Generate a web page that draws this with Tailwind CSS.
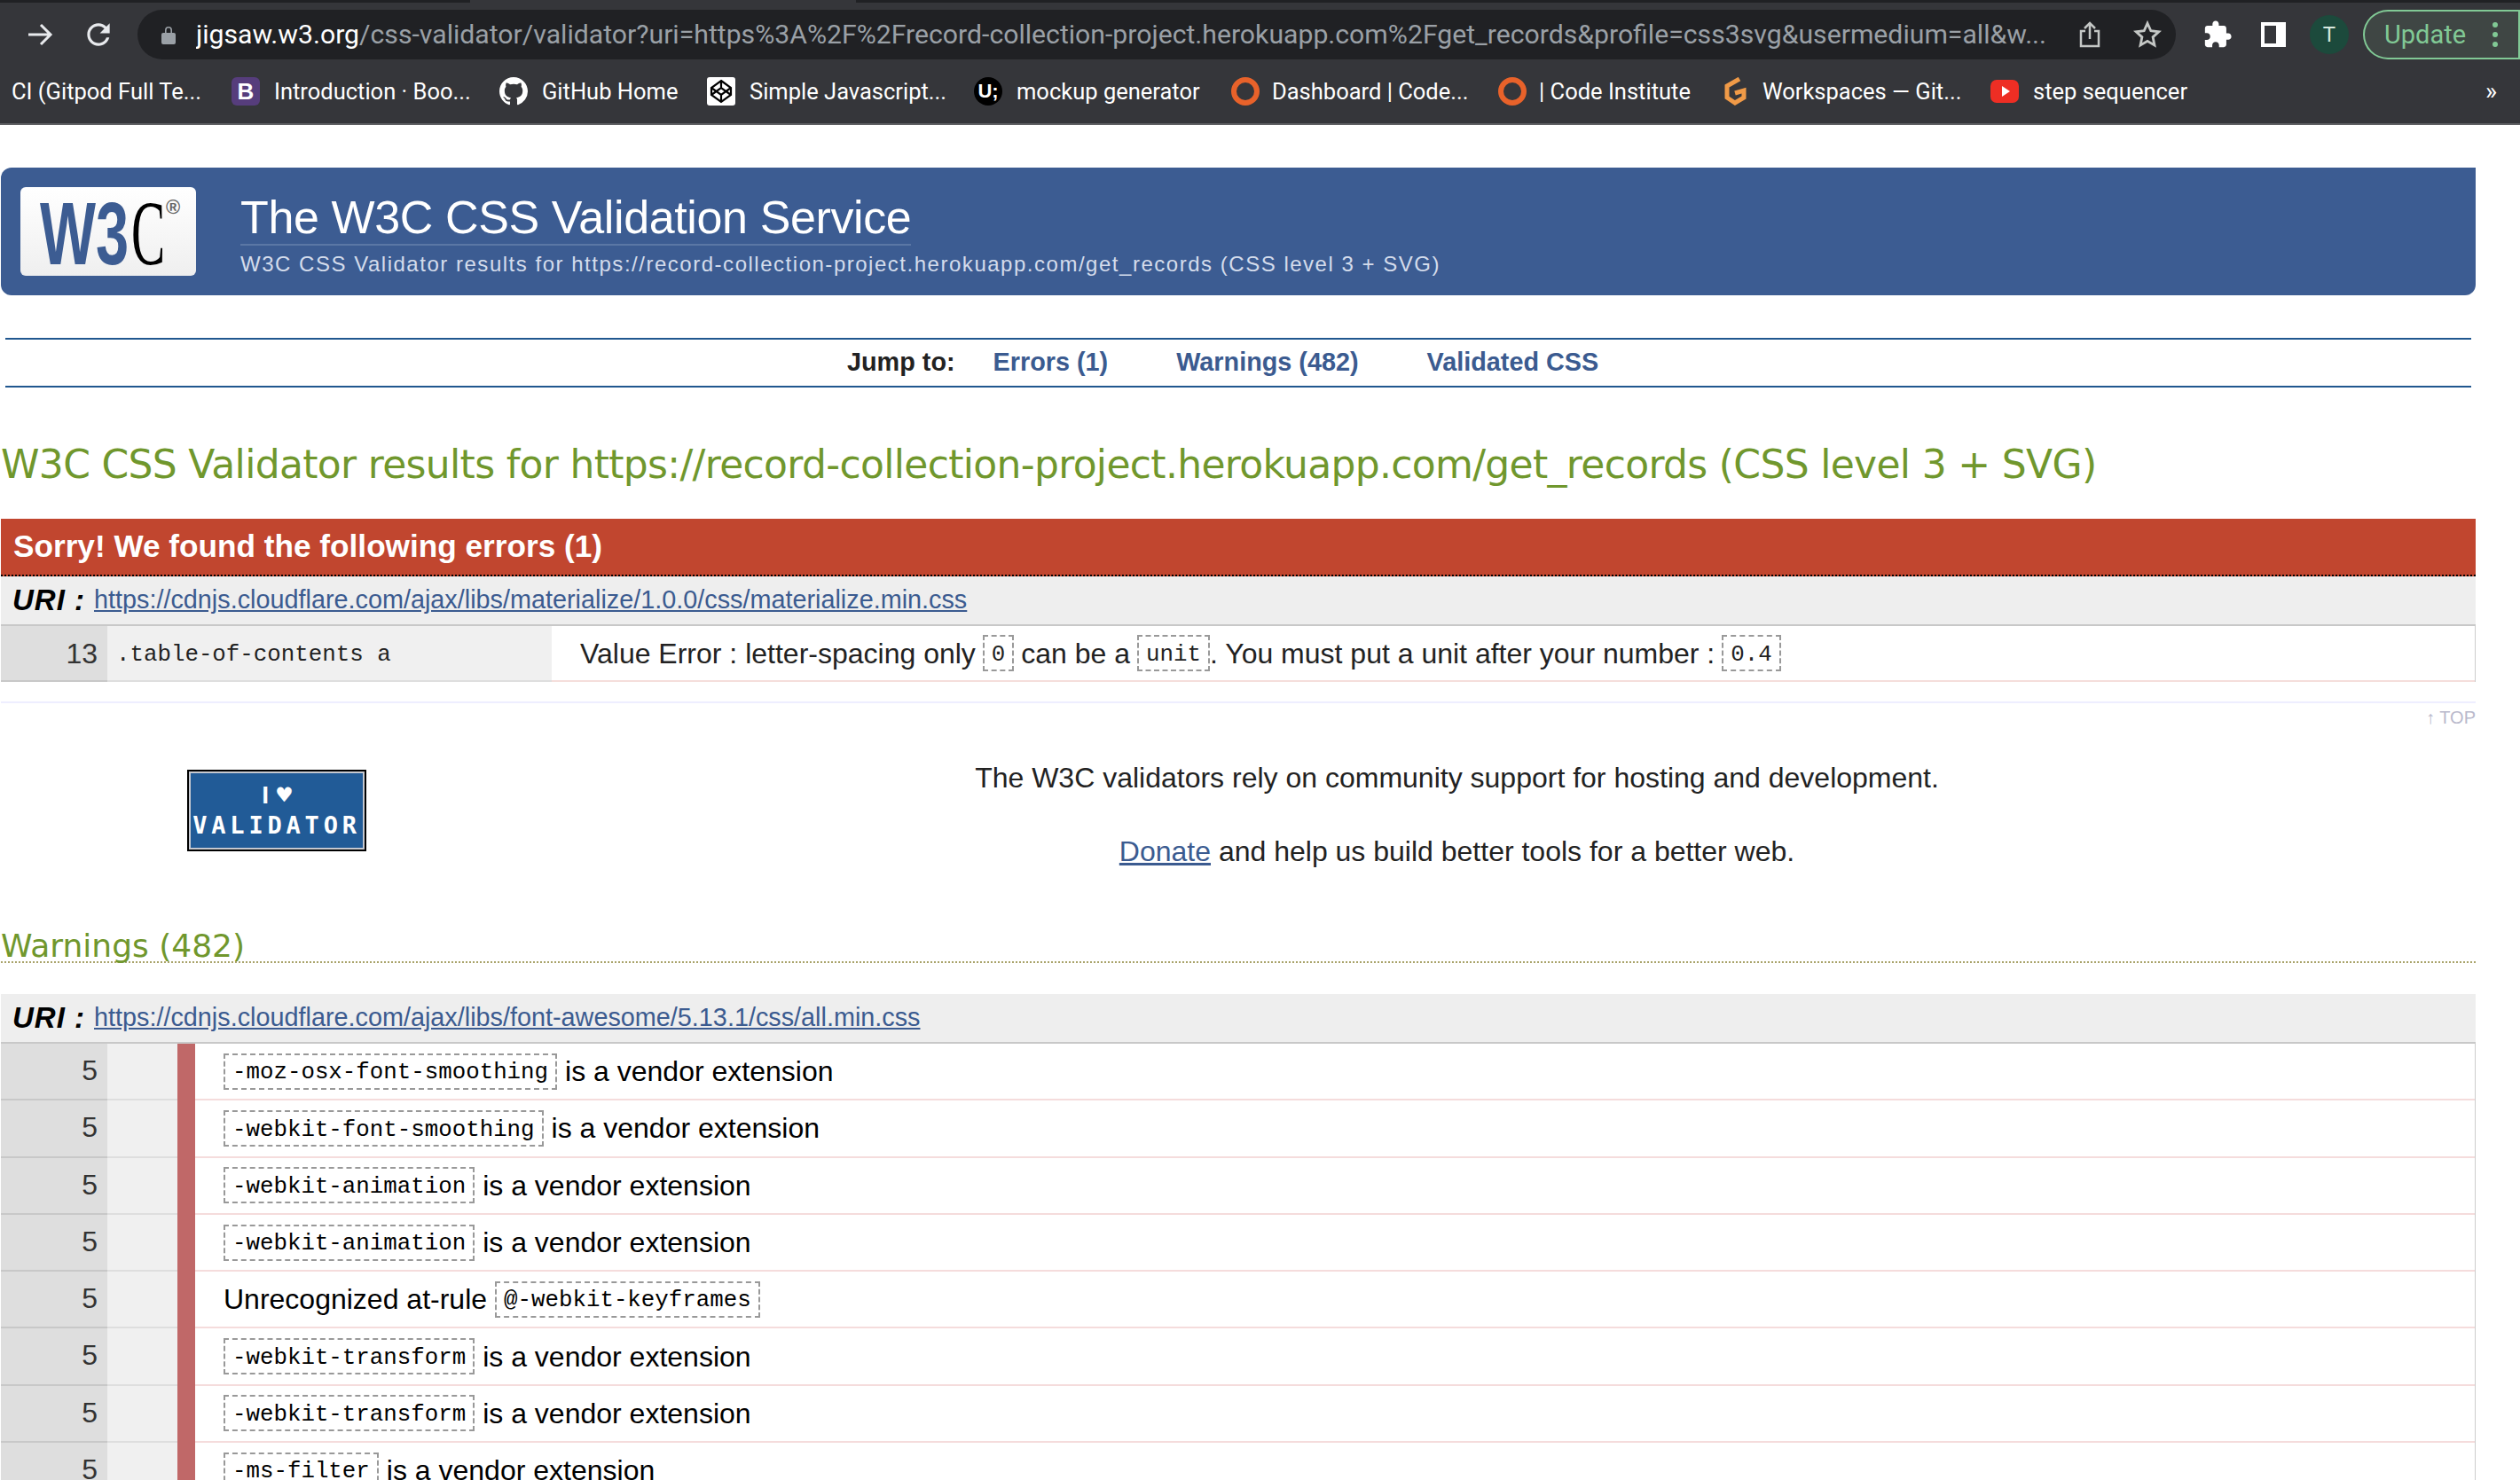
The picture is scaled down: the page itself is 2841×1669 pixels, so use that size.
<!doctype html>
<html lang="en">
<head>
<meta charset="UTF-8" />
<title>W3C CSS Validator results</title>
<script src="https://cdn.jsdelivr.net/npm/@tailwindcss/browser@4"></script>
</head>
<body class="bg-white h-[1669px] overflow-hidden font-['Liberation_Sans',Arial,sans-serif] text-[#222]">

<!-- browser chrome -->
<div class="h-[141px] bg-[#35363a] border-b-2 border-[#5f6063] font-['Roboto',sans-serif] text-white">
  <div class="flex h-[3px]">
    <div class="w-[530px] bg-[#202124]"></div>
    <div class="w-[435px]"></div>
    <div class="flex-1 bg-[#202124]"></div>
  </div>
  <div class="flex items-center h-[56px] mt-[8px] relative">
    <svg class="ml-[29px] w-[32px] h-[32px]" viewBox="0 0 32 32" fill="none" stroke="#e8eaed" stroke-width="3"><path d="M3 16h25M17 5l11 11-11 11"/></svg>
    <svg class="ml-[31px] w-[38px] h-[38px]" viewBox="0 0 24 24" fill="#e8eaed"><path d="M17.65 6.35C16.2 4.9 14.21 4 12 4c-4.42 0-7.99 3.58-7.99 8s3.57 8 7.99 8c3.73 0 6.84-2.55 7.73-6h-2.08c-.82 2.33-3.04 4-5.65 4-3.31 0-6-2.69-6-6s2.69-6 6-6c1.66 0 3.14.69 4.22 1.78L13 11h7V4l-2.35 2.35z"/></svg>
    <div class="ml-[25px] w-[2298px] h-[56px] bg-[#202124] rounded-full flex items-center">
      <svg class="ml-[27px] w-[16px] h-[22px]" viewBox="0 0 16 22" fill="#9aa0a6"><path d="M4 9V6a4 4 0 0 1 8 0v3h-1.600V6a2.400 2.400 0 0 0-4.800 0v3z"/><rect y="9" width="16" height="13" rx="2"/></svg>
      <div class="ml-[23px] w-[2088px] text-[30.200px] leading-[40px] whitespace-nowrap overflow-hidden"><span class="text-white">jigsaw.w3.org</span><span class="text-[#9aa0a6]">/css-validator/validator?uri=https%3A%2F%2Frecord-collection-project.herokuapp.com%2Fget_records&amp;profile=css3svg&amp;usermedium=all&amp;w...</span></div>
      <svg class="ml-[35px] w-[24px] h-[30px]" viewBox="0 0 24 30" fill="none" stroke="#c4c7c5" stroke-width="2.500"><path d="M7 11H2v17h20V11h-5M12 20V2M6 8l6-6 6 6"/></svg>
      <svg class="ml-[36px] w-[34px] h-[34px]" viewBox="0 0 24 24" fill="none" stroke="#c4c7c5" stroke-width="2"><path d="M12 3l2.700 6 6.300.700-4.700 4.300 1.300 6.500L12 17.200 6.400 20.500 7.700 14 3 9.700 9.300 9z"/></svg>
    </div>
    <svg class="ml-[30px] w-[34px] h-[34px]" viewBox="0 0 24 24" fill="#fff"><path d="M20.500 11H19V7c0-1.100-.9-2-2-2h-4V3.500C13 2.120 11.880 1 10.500 1S8 2.120 8 3.500V5H4c-1.100 0-1.990.9-1.990 2v3.800H3.500c1.490 0 2.700 1.210 2.700 2.700s-1.210 2.700-2.700 2.700H2V20c0 1.100.9 2 2 2h3.800v-1.500c0-1.490 1.210-2.700 2.700-2.700 1.490 0 2.700 1.210 2.700 2.700V22H17c1.100 0 2-.9 2-2v-4h1.500c1.380 0 2.500-1.120 2.500-2.500S21.880 11 20.500 11z"/></svg>
    <div class="ml-[32px] w-[28px] h-[28px] border-y-[4px] border-l-[4px] border-r-[11px] border-white"></div>
    <div class="ml-[27px] w-[44px] h-[44px] rounded-full bg-[#1c4a3c] text-[#d7e8df] text-[24px] flex items-center justify-center">T</div>
    <div class="ml-[16px] flex-1 h-[56px] rounded-l-full rounded-r-[28px] border-2 border-[#81c995] bg-[#3f4644] flex items-center text-[#81c995] text-[29px]">
      <span class="ml-[22px] pt-[2px]">Update</span>
      <svg class="ml-[29px] w-[8px] h-[30px]" viewBox="0 0 8 30" fill="#81c995"><circle cx="4" cy="4" r="3"/><circle cx="4" cy="15" r="3"/><circle cx="4" cy="26" r="3"/></svg>
    </div>
  </div>
  <div class="flex items-center h-[36px] mt-[18px] pl-[13px] text-[25.500px] leading-[36px] whitespace-nowrap">
    <span class="w-[248px]">CI (Gitpod Full Te...</span>
    <span class="w-[32px] h-[32px] rounded-[6px] bg-[#563d7c] flex items-center justify-center font-['Liberation_Sans'] font-bold text-[26px]">B</span>
    <span class="ml-[16px] w-[254px]">Introduction · Boo...</span>
    <svg class="w-[32px] h-[32px]" viewBox="0 0 16 16" fill="#fff"><path d="M8 0C3.580 0 0 3.580 0 8c0 3.540 2.290 6.530 5.470 7.590.4.070.55-.17.55-.38 0-.19-.01-.82-.01-1.490-2.010.37-2.530-.49-2.690-.94-.09-.23-.48-.94-.82-1.130-.28-.15-.68-.52-.01-.53.63-.01 1.080.58 1.230.82.72 1.210 1.870.87 2.330.66.07-.52.28-.87.51-1.070-1.780-.2-3.640-.89-3.640-3.950 0-.87.31-1.590.82-2.150-.08-.2-.36-1.020.08-2.120 0 0 .67-.21 2.200.82.64-.18 1.320-.27 2-.27.68 0 1.360.09 2 .27 1.530-1.040 2.200-.82 2.200-.82.44 1.100.16 1.920.08 2.120.51.56.82 1.270.82 2.150 0 3.070-1.870 3.750-3.650 3.950.29.25.54.73.54 1.480 0 1.070-.01 1.930-.01 2.200 0 .21.15.46.55.38A8.013 8.013 0 0016 8c0-4.420-3.580-8-8-8z"/></svg>
    <span class="ml-[16px] w-[186px]">GitHub Home</span>
    <svg class="w-[32px] h-[32px]" viewBox="0 0 32 32"><rect width="32" height="32" rx="3" fill="#fff"/><path d="M16 4l11 8v8l-11 8-11-8v-8zM16 4v8M27 12l-11 8-11-8M16 28v-8M5 20l11-8 11 8" fill="none" stroke="#000" stroke-width="2.200"/></svg>
    <span class="ml-[16px] w-[253px]">Simple Javascript...</span>
    <span class="w-[32px] h-[32px] rounded-full bg-black flex items-center justify-center font-['Liberation_Sans'] font-bold text-[22px]">U;</span>
    <span class="ml-[16px] w-[242px]">mockup generator</span>
    <span class="w-[32px] h-[32px] rounded-full border-[6px] border-[#e8622a]"></span>
    <span class="ml-[14px] w-[255px]">Dashboard | Code...</span>
    <span class="w-[32px] h-[32px] rounded-full border-[6px] border-[#e8622a]"></span>
    <span class="ml-[14px] w-[206px]">| Code Institute</span>
    <svg class="w-[30px] h-[32px]" viewBox="0 0 30 32" fill="none" stroke="#f09a47" stroke-width="5"><path d="M20 2L6 10v13l9 6 10-6V15l-10 3"/></svg>
    <span class="ml-[16px] w-[257px]">Workspaces — Git...</span>
    <svg class="w-[32px] h-[32px]" viewBox="0 0 32 32"><rect y="3" width="32" height="26" rx="7" fill="#ee2e24"/><path d="M13 10l9 6-9 6z" fill="#fff"/></svg>
    <span class="ml-[16px]">step sequencer</span>
    <span class="absolute left-[2802px] text-[28px]">»</span>
  </div>
</div>

<div class="pl-px w-[2791px]">
  <!-- header -->
  <div class="mt-[48px] h-[144px] bg-[#3c5c92] rounded-l-[12px] rounded-br-[12px] flex">
    <div class="ml-[22px] mt-[22px] w-[198px] h-[100px] rounded-[6px] bg-linear-to-b from-white to-[#efefef]">
      <svg viewBox="0 0 198 100" class="w-[198px] h-[100px] overflow-visible">
        <text transform="translate(22 87) scale(.667 1)" font-family="Liberation Sans" font-weight="700" font-size="100" fill="#3c5c92">W3</text>
        <text transform="translate(125 87) scale(.55 1)" font-family="Liberation Serif" font-size="104" fill="#000">C</text>
        <text x="164" y="30" font-family="Liberation Sans" font-weight="700" font-size="22" fill="#666">®</text>
      </svg>
    </div>
    <div class="ml-[50px] flex flex-col">
      <h1 class="mt-[30px] h-[58px] w-fit border-b-2 border-[#5b77a5] text-white text-[52px] leading-[52px] tracking-[-0.38px] whitespace-nowrap">The W3C CSS Validation Service</h1>
      <p class="mt-[5px] text-[#d4dcec] text-[24px] leading-[32px] tracking-[1.520px] whitespace-nowrap">W3C CSS Validator results for https://record-collection-project.herokuapp.com/get_records (CSS level 3 + SVG)</p>
    </div>
  </div>

  <!-- jump to -->
  <div class="mt-[48px] mx-[5px] h-[56px] border-y-2 border-[#20578f] flex items-center text-[28.800px] font-bold whitespace-nowrap pl-[949px]">
    <span>Jump to:</span>
    <a class="ml-[43px] text-[#3b5b90]">Errors (1)</a>
    <a class="ml-[77px] text-[#3b5b90]">Warnings (482)</a>
    <a class="ml-[77px] text-[#3b5b90]">Validated CSS</a>
  </div>

  <h2 class="h-[148px] pt-[26px] flex items-center text-[44px] tracking-[-0.680px] text-[#70972d] font-['DejaVu_Sans',sans-serif] whitespace-nowrap">W3C CSS Validator results for https://record-collection-project.herokuapp.com/get_records (CSS level 3 + SVG)</h2>

  <!-- errors -->
  <div class="h-[65px] bg-[#c1462f] border-b-2 border-dotted border-black pl-[14px] flex items-center text-white font-bold text-[35.200px] whitespace-nowrap">Sorry! We found the following errors (1)</div>
  <div class="h-[56px] bg-[#eeeeee] border-b-2 border-[#c8c8c8] pl-[13px] flex items-center text-[28.800px] whitespace-nowrap">
    <b class="w-[92px] italic text-black text-[33px] tracking-[1px]">URI :</b>
    <a class="text-[#3b5b90] underline">https://cdnjs.cloudflare.com/ajax/libs/materialize/1.0.0/css/materialize.min.css</a>
  </div>
  <div class="flex h-[63px] border-r border-[#ccc] text-[#222]">
    <div class="w-[120px] border-b-2 border-[#c8c8c8] bg-[#dedede] text-[#333] text-[32px] text-right pr-[11px] leading-[62px]">13</div>
    <div class="w-[501px] border-b-2 border-[#dedede] bg-[#f0f0f0] pl-[10px] font-['Liberation_Mono',monospace] text-[25.800px] leading-[66px]">.table-of-contents a</div>
    <div class="flex-1 border-b-2 border-[#f5dedb] pl-[32px] flex items-center text-[32px] whitespace-nowrap gap-[8px]">
      <span>Value Error : letter-spacing only</span>
      <code class="h-[41px] px-[8px] pt-[5px] inline-flex items-center border-2 border-dashed border-[#999] font-['Liberation_Mono',monospace] text-[25.800px] text-[#222]">0</code>
      <span>can be a</span>
      <span class="flex items-center"><code class="h-[41px] px-[8px] pt-[5px] inline-flex items-center border-2 border-dashed border-[#999] font-['Liberation_Mono',monospace] text-[25.800px]">unit</code>. You must put a unit after your number :</span>
      <code class="h-[41px] px-[8px] pt-[5px] inline-flex items-center border-2 border-dashed border-[#999] font-['Liberation_Mono',monospace] text-[25.800px]">0.4</code>
    </div>
  </div>

  <div class="mt-[22px] border-t-2 border-[#eeeeff]"></div>
  <div class="h-[32px] flex justify-end items-center text-[20px] text-[#b9b9cc] whitespace-nowrap">↑ TOP</div>

  <!-- donate -->
  <div class="h-[215px] flex">
    <div class="w-[493px] shrink-0 pt-[43px] pl-[210px]">
      <div class="w-[202px] h-[92px] border-2 border-black bg-[#215b97] outline-2 -outline-offset-4 outline-[#c6c9d0] flex flex-col items-center justify-center text-white font-['DejaVu_Sans_Mono',monospace] font-bold leading-[34px]">
        <span class="flex items-center gap-[9px] text-[28px]"><span class="font-['Liberation_Sans']">I</span><span>♥</span></span>
        <span class="text-[27px] tracking-[4.800px]">VALIDATOR</span>
      </div>
    </div>
    <div class="flex-1 text-center text-[32px] leading-[46px] pt-[29px]">
      <p>The W3C validators rely on community support for hosting and development.</p>
      <p class="mt-[37px]"><a class="text-[#3b5b90] underline">Donate</a> and help us build better tools for a better web.</p>
    </div>
  </div>

  <!-- warnings -->
  <div class="h-[46px] border-b-2 border-dotted border-[#a9a36a] pt-[10px] leading-[34px] text-[36px] text-[#70972d] font-['DejaVu_Sans',sans-serif]">Warnings (482)</div>
  <div class="mt-[35px] h-[56px] bg-[#eeeeee] border-b-2 border-[#c8c8c8] pl-[13px] flex items-center text-[28.800px] whitespace-nowrap">
    <b class="w-[92px] italic text-black text-[33px] tracking-[1px]">URI :</b>
    <a class="text-[#3b5b90] underline">https://cdnjs.cloudflare.com/ajax/libs/font-awesome/5.13.1/css/all.min.css</a>
  </div>

  <div class="border-r border-[#ccc] text-black text-[32px]">
    <div class="flex h-[64.300px]">
      <div class="w-[120px] border-b-2 border-[#c8c8c8] bg-[#dedede] text-[#333] text-right pr-[11px] leading-[60px]">5</div>
      <div class="w-[79px] border-b-2 border-[#dedede] bg-[#f0f0f0]"></div>
      <div class="w-[20px] bg-[#c06868]"></div>
      <div class="flex-1 border-b-2 border-[#f5dcdc] pl-[32px] flex items-center gap-[9px] whitespace-nowrap"><code class="h-[41px] px-[8px] pt-[5px] inline-flex items-center border-2 border-dashed border-[#999] font-['Liberation_Mono',monospace] text-[25.800px]">-moz-osx-font-smoothing</code><span>is a vendor extension</span></div>
    </div>
    <div class="flex h-[64.300px]">
      <div class="w-[120px] border-b-2 border-[#c8c8c8] bg-[#dedede] text-[#333] text-right pr-[11px] leading-[60px]">5</div>
      <div class="w-[79px] border-b-2 border-[#dedede] bg-[#f0f0f0]"></div>
      <div class="w-[20px] bg-[#c06868]"></div>
      <div class="flex-1 border-b-2 border-[#f5dcdc] pl-[32px] flex items-center gap-[9px] whitespace-nowrap"><code class="h-[41px] px-[8px] pt-[5px] inline-flex items-center border-2 border-dashed border-[#999] font-['Liberation_Mono',monospace] text-[25.800px]">-webkit-font-smoothing</code><span>is a vendor extension</span></div>
    </div>
    <div class="flex h-[64.300px]">
      <div class="w-[120px] border-b-2 border-[#c8c8c8] bg-[#dedede] text-[#333] text-right pr-[11px] leading-[60px]">5</div>
      <div class="w-[79px] border-b-2 border-[#dedede] bg-[#f0f0f0]"></div>
      <div class="w-[20px] bg-[#c06868]"></div>
      <div class="flex-1 border-b-2 border-[#f5dcdc] pl-[32px] flex items-center gap-[9px] whitespace-nowrap"><code class="h-[41px] px-[8px] pt-[5px] inline-flex items-center border-2 border-dashed border-[#999] font-['Liberation_Mono',monospace] text-[25.800px]">-webkit-animation</code><span>is a vendor extension</span></div>
    </div>
    <div class="flex h-[64.300px]">
      <div class="w-[120px] border-b-2 border-[#c8c8c8] bg-[#dedede] text-[#333] text-right pr-[11px] leading-[60px]">5</div>
      <div class="w-[79px] border-b-2 border-[#dedede] bg-[#f0f0f0]"></div>
      <div class="w-[20px] bg-[#c06868]"></div>
      <div class="flex-1 border-b-2 border-[#f5dcdc] pl-[32px] flex items-center gap-[9px] whitespace-nowrap"><code class="h-[41px] px-[8px] pt-[5px] inline-flex items-center border-2 border-dashed border-[#999] font-['Liberation_Mono',monospace] text-[25.800px]">-webkit-animation</code><span>is a vendor extension</span></div>
    </div>
    <div class="flex h-[64.300px]">
      <div class="w-[120px] border-b-2 border-[#c8c8c8] bg-[#dedede] text-[#333] text-right pr-[11px] leading-[60px]">5</div>
      <div class="w-[79px] border-b-2 border-[#dedede] bg-[#f0f0f0]"></div>
      <div class="w-[20px] bg-[#c06868]"></div>
      <div class="flex-1 border-b-2 border-[#f5dcdc] pl-[32px] flex items-center gap-[9px] whitespace-nowrap"><span>Unrecognized at-rule</span><code class="h-[41px] px-[8px] pt-[5px] inline-flex items-center border-2 border-dashed border-[#999] font-['Liberation_Mono',monospace] text-[25.800px]">@-webkit-keyframes</code></div>
    </div>
    <div class="flex h-[64.300px]">
      <div class="w-[120px] border-b-2 border-[#c8c8c8] bg-[#dedede] text-[#333] text-right pr-[11px] leading-[60px]">5</div>
      <div class="w-[79px] border-b-2 border-[#dedede] bg-[#f0f0f0]"></div>
      <div class="w-[20px] bg-[#c06868]"></div>
      <div class="flex-1 border-b-2 border-[#f5dcdc] pl-[32px] flex items-center gap-[9px] whitespace-nowrap"><code class="h-[41px] px-[8px] pt-[5px] inline-flex items-center border-2 border-dashed border-[#999] font-['Liberation_Mono',monospace] text-[25.800px]">-webkit-transform</code><span>is a vendor extension</span></div>
    </div>
    <div class="flex h-[64.300px]">
      <div class="w-[120px] border-b-2 border-[#c8c8c8] bg-[#dedede] text-[#333] text-right pr-[11px] leading-[60px]">5</div>
      <div class="w-[79px] border-b-2 border-[#dedede] bg-[#f0f0f0]"></div>
      <div class="w-[20px] bg-[#c06868]"></div>
      <div class="flex-1 border-b-2 border-[#f5dcdc] pl-[32px] flex items-center gap-[9px] whitespace-nowrap"><code class="h-[41px] px-[8px] pt-[5px] inline-flex items-center border-2 border-dashed border-[#999] font-['Liberation_Mono',monospace] text-[25.800px]">-webkit-transform</code><span>is a vendor extension</span></div>
    </div>
    <div class="flex h-[64.300px]">
      <div class="w-[120px] border-b-2 border-[#c8c8c8] bg-[#dedede] text-[#333] text-right pr-[11px] leading-[60px]">5</div>
      <div class="w-[79px] border-b-2 border-[#dedede] bg-[#f0f0f0]"></div>
      <div class="w-[20px] bg-[#c06868]"></div>
      <div class="flex-1 border-b-2 border-[#f5dcdc] pl-[32px] flex items-center gap-[9px] whitespace-nowrap"><code class="h-[41px] px-[8px] pt-[5px] inline-flex items-center border-2 border-dashed border-[#999] font-['Liberation_Mono',monospace] text-[25.800px]">-ms-filter</code><span>is a vendor extension</span></div>
    </div>
  </div>
</div>
</body>
</html>
